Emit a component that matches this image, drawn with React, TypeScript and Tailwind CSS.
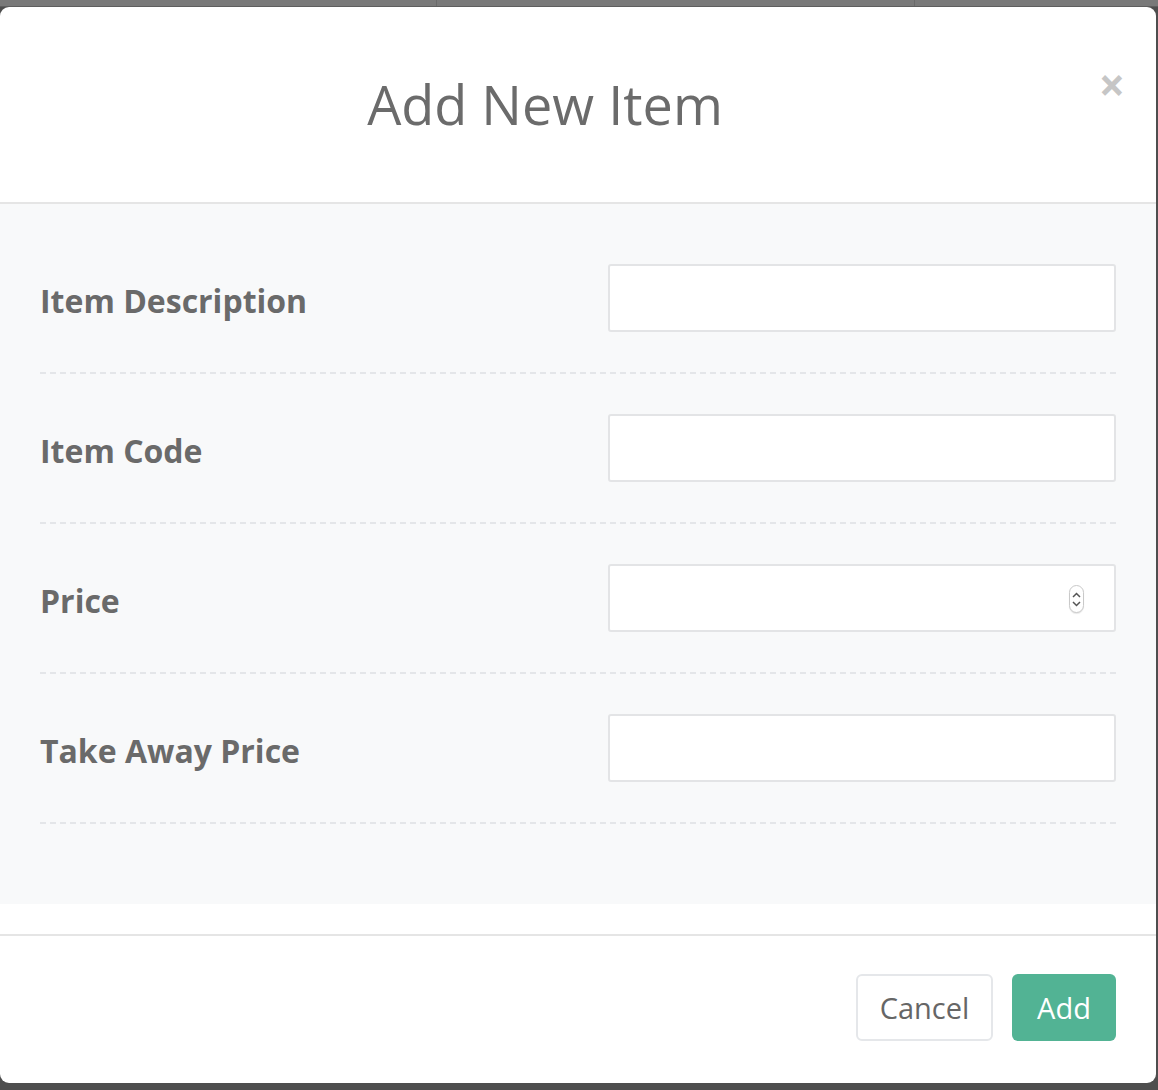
import { useState } from 'react'

const fields = [
  { label: 'Item Description', type: 'text' },
  { label: 'Item Code', type: 'text' },
  { label: 'Price', type: 'number' },
  { label: 'Take Away Price', type: 'text' },
]

export default function App() {
  const [values, setValues] = useState<Record<string, string>>({})

  return (
    <div
      className="relative w-[1158px] h-[1090px] overflow-hidden bg-[#4e4e4e]"
      style={{ fontFamily: '"Open Sans", "Noto Sans", sans-serif' }}
    >
      {/* backdrop strip behind the modal */}
      <div className="flex h-[7px] bg-[#797979] border-b border-[#5e5e5e]">
        <div className="w-[437px] border-r border-[#6a6a6a]" />
        <div className="w-[478px] border-r border-[#6a6a6a]" />
      </div>

      {/* Modal */}
      <div className="w-[1156px] h-[1076px] bg-white rounded-[9px] flex flex-col overflow-hidden">
        {/* Header */}
        <div className="relative h-[197px] shrink-0 flex items-center border-b-2 border-[#e5e5e5]">
          <h2 className="w-[1090px] text-center text-[54px] leading-none text-[#6b6b6b] pb-[2px]">Add New Item</h2>
          <button className="absolute right-[31px] top-[54px] text-[#c6c6c6] text-[46px] font-bold leading-none">×</button>
        </div>

        {/* Body */}
        <div className="bg-[#f8f9fa] h-[700px] shrink-0 pt-[20px] px-[40px]">
          {fields.map(f => (
            <div key={f.label} className="flex items-center justify-between py-[40px] border-b-2 border-dashed border-[#e4e6e9]">
              <label className="text-[32px] font-bold text-[#6a6a6a] pt-[5px]">{f.label}</label>
              <div className="relative w-[508px] h-[68px] bg-white border-2 border-[#e3e4e6] rounded-[3px]">
                <input
                  className="w-full h-full px-4 text-[26px] text-[#555] outline-none bg-transparent"
                  value={values[f.label] ?? ''}
                  onChange={e => setValues(v => ({ ...v, [f.label]: e.target.value }))}
                />
                {f.type === 'number' && (
                  <div className="absolute right-[30px] top-[19px] w-[15px] h-[28px] rounded-full border border-[#c9c9c9] bg-white flex flex-col items-center justify-center gap-[3px] shadow-[0_1px_1px_rgba(0,0,0,0.1)]">
                    <svg width="9" height="6" viewBox="0 0 9 6" fill="none" stroke="#555" strokeWidth="1.5">
                      <path d="M1 5 L4.5 1.5 L8 5" />
                    </svg>
                    <svg width="9" height="6" viewBox="0 0 9 6" fill="none" stroke="#555" strokeWidth="1.5">
                      <path d="M1 1 L4.5 4.5 L8 1" />
                    </svg>
                  </div>
                )}
              </div>
            </div>
          ))}
        </div>

        {/* Footer */}
        <div className="mt-[30px] border-t-2 border-[#e5e5e5] flex justify-end gap-[19px] pt-[38px] pr-[40px]">
          <button className="w-[137px] h-[67px] border-2 border-[#e5e7ea] rounded-[6px] bg-white text-[29px] text-[#666]">
            Cancel
          </button>
          <button className="w-[104px] h-[67px] rounded-[6px] bg-[#52b394] text-[29px] text-white">
            Add
          </button>
        </div>
      </div>
    </div>
  )
}
